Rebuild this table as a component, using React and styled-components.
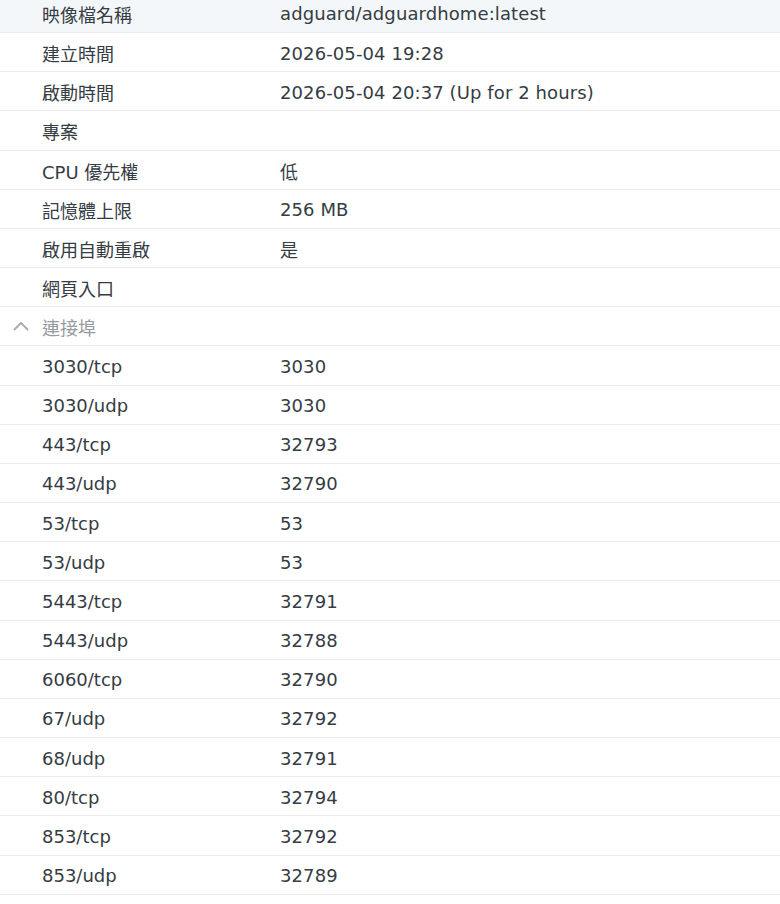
import React from "react";
import styled, { createGlobalStyle } from "styled-components";

const GlobalStyle = createGlobalStyle`
  html, body {
    margin: 0;
    padding: 0;
    background: #ffffff;
  }
  body {
    font-family: "DejaVu Sans", "Noto Sans CJK TC", sans-serif;
    overflow: hidden;
  }
`;

const info = [
  ["映像檔名稱", "adguard/adguardhome:latest"],
  ["建立時間", "2026-05-04 19:28"],
  ["啟動時間", "2026-05-04 20:37 (Up for 2 hours)"],
  ["專案", ""],
  ["CPU 優先權", "低"],
  ["記憶體上限", "256 MB"],
  ["啟用自動重啟", "是"],
  ["網頁入口", ""],
];

const ports = [
  ["3030/tcp", "3030"],
  ["3030/udp", "3030"],
  ["443/tcp", "32793"],
  ["443/udp", "32790"],
  ["53/tcp", "53"],
  ["53/udp", "53"],
  ["5443/tcp", "32791"],
  ["5443/udp", "32788"],
  ["6060/tcp", "32790"],
  ["67/udp", "32792"],
  ["68/udp", "32791"],
  ["80/tcp", "32794"],
  ["853/tcp", "32792"],
  ["853/udp", "32789"],
];

const Wrapper = styled.div`
  margin-top: -6.2px;
  width: 780px;
`;

const Row = styled.div`
  display: grid;
  grid-template-columns: 280px 1fr;
  align-items: center;
  box-sizing: border-box;
  height: 39.18px;
  padding-top: 2px;
  border-bottom: 1px solid #ebedef;
  background: ${(p) => (p.$active ? "#f4f7fa" : "#ffffff")};
  font-size: 18px;
  color: #353c43;
`;

const Label = styled.div`
  padding-left: 42px;
  white-space: nowrap;
`;

const Value = styled.div`
  white-space: nowrap;
  letter-spacing: 0.1px;
`;

const GroupHeader = styled.div`
  display: flex;
  align-items: center;
  box-sizing: border-box;
  height: 39.18px;
  padding-top: 2px;
  border-bottom: 1px solid #ebedef;
  font-size: 18px;
  color: #969ba0;
`;

const Toggle = styled.span`
  display: flex;
  align-items: center;
  justify-content: center;
  width: 42px;
  padding-right: 1px;
  box-sizing: border-box;
  margin-bottom: 2px;
  color: #a7abaf;
`;

const Chevron = () => (
  <svg width="16" height="10" viewBox="0 0 16 10" fill="none">
    <path
      d="M1.5 8.5 L8 2 L14.5 8.5"
      stroke="currentColor"
      strokeWidth="1.8"
      strokeLinecap="round"
      strokeLinejoin="round"
    />
  </svg>
);

const App = () => {
  return (
    <>
      <GlobalStyle />
      <Wrapper>
        {info.map(([k, v], i) => (
          <Row key={k} $active={i === 0}>
            <Label>{k}</Label>
            <Value>{v}</Value>
          </Row>
        ))}
        <GroupHeader>
          <Toggle>
            <Chevron />
          </Toggle>
          連接埠
        </GroupHeader>
        {ports.map(([k, v]) => (
          <Row key={k}>
            <Label>{k}</Label>
            <Value>{v}</Value>
          </Row>
        ))}
      </Wrapper>
    </>
  );
};

export default App;
